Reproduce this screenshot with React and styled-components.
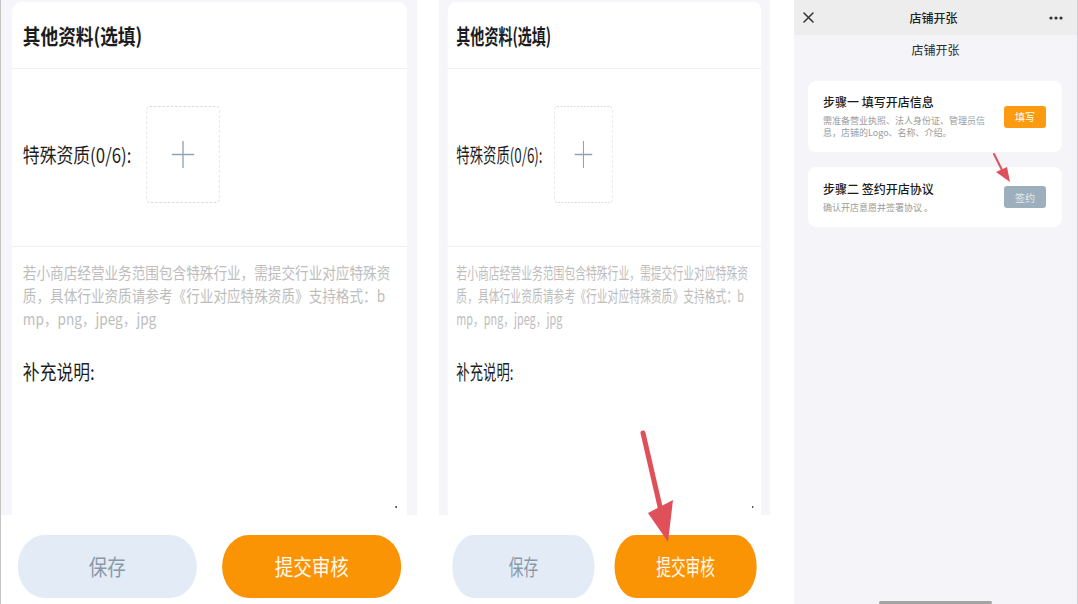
import styled, { createGlobalStyle } from "styled-components";

const GlobalStyle = createGlobalStyle`
  * { box-sizing: border-box; }
  html, body { margin: 0; padding: 0; background: #fff; }
  body { font-family: "Noto Sans CJK SC", "Noto Sans", sans-serif; }
`;

const DESIGN_WIDTH = 496;

const Page = styled.div`
  display: flex;
  width: 1078px;
  height: 604px;
  overflow: hidden;
  background: #fff;
`;

// phone screenshots were squeezed horizontally, so each form screen is laid
// out at its design width and scaled down to the frame
const Frame = styled.div`
  position: relative;
  flex-shrink: 0;
  width: ${(p) => p.$w}px;
  height: 604px;
  margin-left: ${(p) => p.$offset || 0}px;
  overflow: hidden;
  border-left: ${(p) => (p.$edge ? "1px solid #c4c4c4" : "none")};
`;

const Screen = styled.div`
  display: flex;
  flex-direction: column;
  width: ${DESIGN_WIDTH}px;
  height: 100%;
  background: #f5f5fa;
  transform: scaleX(${(p) => p.$scale});
  transform-origin: 0 0;
`;

const Content = styled.div`
  flex: 1;
  display: flex;
  padding: 2px 13px 0;
  min-height: 0;
`;

const Card = styled.div`
  flex: 1;
  display: flex;
  flex-direction: column;
  background: #fff;
  border-radius: 10px 10px 0 0;
`;

const CardHeader = styled.div`
  height: 67px;
  display: flex;
  align-items: center;
  padding: 0 13px;
  border-bottom: 1px solid #f1f1f3;
  font-size: 21px;
  font-weight: 700;
  color: #1c1c1c;
`;

const UploadRow = styled.div`
  height: 178px;
  display: flex;
  align-items: center;
  gap: 18px;
  padding: 0 13px 6px;
  border-bottom: 1px solid #f1f1f3;
`;

const Label = styled.div`
  font-size: 20px;
  line-height: 28px;
  color: #1e1e1e;
  margin-top: ${(p) => p.$top || 0}px;
  padding: ${(p) => (p.$pad ? "0 13px" : "0")};
`;

const UploadBox = styled.div`
  width: 87px;
  height: 97px;
  display: flex;
  align-items: center;
  justify-content: center;
  border: 1px dashed #d8dbe0;
  border-radius: 4px;
`;

const Hint = styled.div`
  padding: 14px 0 0 13px;
  font-size: 16.2px;
  line-height: 23px;
  color: #bdbdbd;
`;

const HintLine = styled.span`
  display: block;
  white-space: nowrap;
`;

const ResizeDot = styled.span`
  align-self: flex-end;
  margin: auto 12px 7px 0;
  width: 2px;
  height: 2px;
  background: #555;
`;

const BottomBar = styled.div`
  height: 89px;
  display: flex;
  gap: 30px;
  padding: 20px 20px 6px;
  background: #fff;
`;

const PillButton = styled.div`
  flex: 1;
  height: 63px;
  display: flex;
  align-items: center;
  justify-content: center;
  padding-bottom: 3px;
  border-radius: 32px;
  font-size: 22px;
  background: ${(p) => (p.$primary ? "#fb9405" : "#e3ebf6")};
  color: ${(p) => (p.$primary ? "#fffaf0" : "#8a99a8")};
`;

const Arrow = styled.svg`
  position: absolute;
  left: ${(p) => p.$x}px;
  top: ${(p) => p.$y}px;
  overflow: visible;
`;

const Shop = styled.div`
  position: relative;
  flex-shrink: 0;
  width: 284px;
  height: 604px;
  margin-left: 24px;
  display: flex;
  flex-direction: column;
  background: #f4f4f9;
  border-right: 1px solid #cfcfcf;
`;

const NavBar = styled.div`
  height: 35px;
  display: flex;
  align-items: center;
  justify-content: space-between;
  padding: 0 14px 0 9px;
  background: #ededed;
`;

const NavTitle = styled.div`
  font-size: 12px;
  font-weight: 500;
  color: #222;
  margin-left: 4px;
`;

const SubTitle = styled.div`
  margin-top: 7px;
  text-align: center;
  font-size: 12px;
  line-height: 16px;
  color: #2a2a2a;
`;

const StepList = styled.div`
  display: flex;
  flex-direction: column;
  gap: 15px;
  padding: 23px 15px 0 14px;
`;

const StepCard = styled.div`
  display: flex;
  align-items: center;
  justify-content: space-between;
  padding: ${(p) => (p.$tall ? "13px" : "13.5px")} 16px ${(p) => (p.$tall ? "13px" : "13.5px")} 15px;
  background: #fff;
  border-radius: 8px;
`;

const StepText = styled.div`
  display: flex;
  flex-direction: column;
  gap: 5px;
  width: 168px;
`;

const StepTitle = styled.div`
  font-size: 12px;
  line-height: 16px;
  font-weight: 500;
  color: #1a1a1a;
`;

const StepDesc = styled.div`
  font-size: 9px;
  line-height: 12px;
  color: #9b9b9b;
  white-space: pre-wrap;
`;

const StepButton = styled.div`
  width: 42px;
  height: 22px;
  display: flex;
  align-items: center;
  justify-content: center;
  border-radius: 3px;
  font-size: 10px;
  background: ${(p) => (p.$done ? "#9dafbd" : "#fc9a12")};
  color: ${(p) => (p.$done ? "#e2e9ee" : "#fff")};
`;

const HomeBar = styled.div`
  margin-top: auto;
  align-self: center;
  width: 113px;
  height: 3px;
  border-radius: 2px;
  background: #a3a3a3;
`;

const PlusIcon = () => (
  <svg width="27" height="27" viewBox="0 0 27 27">
    <line x1="13.5" y1="0" x2="13.5" y2="27" stroke="#91a3b0" strokeWidth="1.6" />
    <line x1="0" y1="13.5" x2="27" y2="13.5" stroke="#91a3b0" strokeWidth="1.6" />
  </svg>
);

const hintLines = [
  "若小商店经营业务范围包含特殊行业，需提交行业对应特殊资",
  "质，具体行业资质请参考《行业对应特殊资质》支持格式：b",
  "mp，png，jpeg，jpg",
];

const FormScreen = ({ scale }) => (
  <Screen $scale={scale}>
    <Content>
      <Card>
        <CardHeader>其他资料(选填)</CardHeader>
        <UploadRow>
          <Label>特殊资质(0/6):</Label>
          <UploadBox>
            <PlusIcon />
          </UploadBox>
        </UploadRow>
        <Hint>
          {hintLines.map((line, index) => (
            <HintLine key={index}>{line}</HintLine>
          ))}
        </Hint>
        <Label $top={28} $pad>
          补充说明:
        </Label>
        <ResizeDot />
      </Card>
    </Content>
    <BottomBar>
      <PillButton>保存</PillButton>
      <PillButton $primary>提交审核</PillButton>
    </BottomBar>
  </Screen>
);

const steps = [
  {
    title: "步骤一 填写开店信息",
    desc: "需准备营业执照、法人身份证、管理员信息，店铺的Logo、名称、介绍。",
    action: "填写",
    done: false,
  },
  {
    title: "步骤二 签约开店协议",
    desc: "确认开店意愿并签署协议 。",
    action: "签约",
    done: true,
  },
];

export default function App() {
  return (
    <>
      <GlobalStyle />
      <Page>
        <Frame $w={417} $edge>
          <FormScreen scale={417 / DESIGN_WIDTH} />
        </Frame>
        <Frame $w={331} $offset={22}>
          <FormScreen scale={331 / DESIGN_WIDTH} />
          <Arrow $x={195} $y={425} width="50" height="125" viewBox="0 0 50 125">
            <line x1="9" y1="8" x2="27" y2="86" stroke="#e0505a" strokeWidth="5" strokeLinecap="round" />
            <polygon points="14,88 39,75 34,117" fill="#e0505a" />
          </Arrow>
        </Frame>
        <Shop>
          <NavBar>
            <svg width="11" height="11" viewBox="0 0 11 11">
              <path d="M1 1L10 10M10 1L1 10" stroke="#333" strokeWidth="1.5" strokeLinecap="round" />
            </svg>
            <NavTitle>店铺开张</NavTitle>
            <svg width="14" height="4" viewBox="0 0 14 4">
              <circle cx="2" cy="2" r="1.6" fill="#333" />
              <circle cx="7" cy="2" r="1.6" fill="#333" />
              <circle cx="12" cy="2" r="1.6" fill="#333" />
            </svg>
          </NavBar>
          <SubTitle>店铺开张</SubTitle>
          <StepList>
            {steps.map((step, index) => (
              <StepCard key={index} $tall={!step.done}>
                <StepText>
                  <StepTitle>{step.title}</StepTitle>
                  <StepDesc>{step.desc}</StepDesc>
                </StepText>
                <StepButton $done={step.done}>{step.action}</StepButton>
              </StepCard>
            ))}
          </StepList>
          <Arrow $x={195} $y={148} width="25" height="40" viewBox="0 0 25 40">
            <line x1="5" y1="6" x2="13" y2="22" stroke="#e0505a" strokeWidth="2" strokeLinecap="round" />
            <polygon points="7,24 18,19 21,34" fill="#e0505a" />
          </Arrow>
          <HomeBar />
        </Shop>
      </Page>
    </>
  );
}
